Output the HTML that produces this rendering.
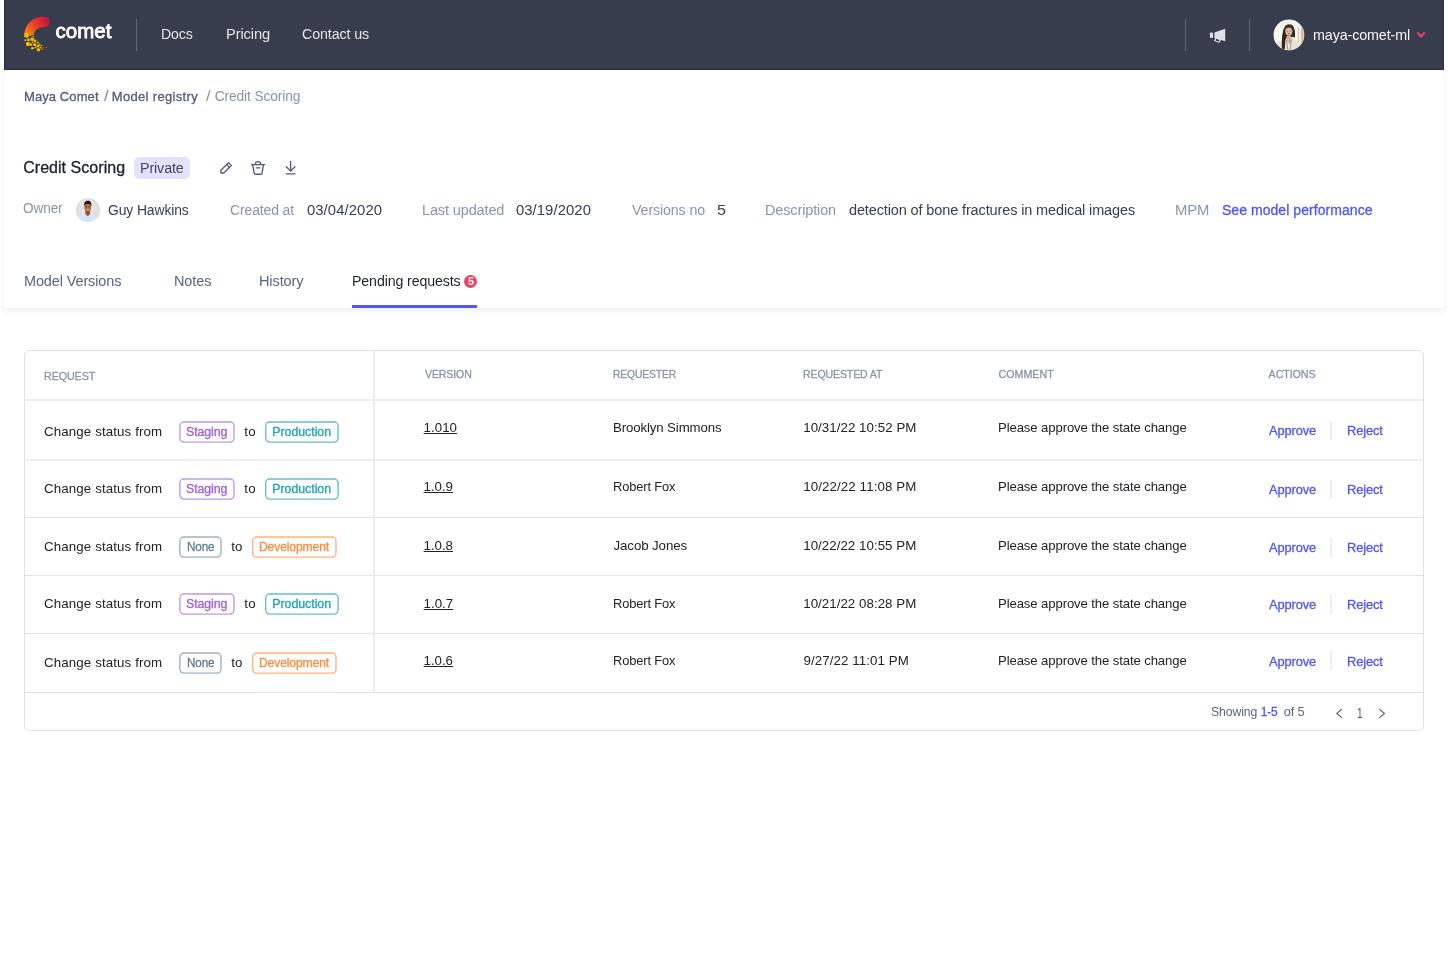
<!DOCTYPE html>
<html lang="en">
<head>
<meta charset="utf-8">
<title>Credit Scoring - Model registry - Comet</title>
<style>
html,body{margin:0;padding:0;}
body{width:1448px;height:960px;overflow:hidden;background:#fff;position:relative;font-family:"Liberation Sans",sans-serif;}
.g{display:contents;}
.t{position:absolute;white-space:pre;line-height:20px;font-family:"Liberation Sans",sans-serif;}
.nav{position:absolute;left:4px;top:0;width:1440px;height:70px;background:#383D4E;box-sizing:border-box;border-left:1px solid #2A2F43;border-right:1px solid #2A2F43;border-bottom:1px solid #262B40;}
.panel{position:absolute;left:4px;top:70px;width:1440px;height:238px;background:#fff;box-shadow:0 3px 6px rgba(0,0,0,0.07);}
.vd{position:absolute;width:1px;background:#5D6580;}
.pill{position:absolute;left:134px;top:157px;width:56px;height:22px;border-radius:5px;background:#E3E2FC;}
.tabline{position:absolute;left:352px;top:305px;width:125px;height:3px;background:#5155F5;}
.dot{position:absolute;left:464px;top:274.9px;width:13.1px;height:13.1px;border-radius:50%;background:#EE4067;}
.table{position:absolute;left:24px;top:350px;width:1400px;height:381px;box-sizing:border-box;border:1px solid #E2E2E4;border-radius:5px;background:#fff;}
.hl{position:absolute;left:25px;width:1398px;height:1px;background:#E3E3E5;}
.vl{position:absolute;left:373px;top:351px;width:2px;height:341px;background:#EEEEEF;}
.ad{position:absolute;left:1330px;width:2px;height:19px;background:#EEEEEF;}
.bd{position:absolute;box-sizing:border-box;border:1px solid #ccc;border-radius:5px;background:#fff;}
svg{position:absolute;overflow:visible;}
</style>
</head>
<body>
<div class="nav"></div>
<div class="panel"></div>

<!-- logo -->
<svg style="left:0;top:0" width="130" height="70" viewBox="0 0 130 70">
<defs>
<linearGradient id="lg1" x1="46" y1="18" x2="26" y2="36" gradientUnits="userSpaceOnUse">
<stop offset="0" stop-color="#E3123C"/><stop offset="0.45" stop-color="#EE3A26"/><stop offset="1" stop-color="#F5900C"/>
</linearGradient>
<linearGradient id="lg2" x1="49" y1="22" x2="34" y2="34" gradientUnits="userSpaceOnUse">
<stop offset="0" stop-color="#B3153A" stop-opacity="0.85"/><stop offset="1" stop-color="#E8501F" stop-opacity="0"/>
</linearGradient>
</defs>
<path d="M44.6 16.9 C34 16.2 25.4 23.5 24.3 33.8 L33.6 35.2 C34.4 30.2 38.4 26.8 44.4 27 C51.2 27.1 51.6 17.2 44.6 16.9 Z" fill="url(#lg1)"/>
<path d="M44.6 18.4 C38 20 32 25.5 30 34.6 L33.6 35.2 C34.4 30.2 38.4 26.8 44.4 27 C50.2 27.1 50.6 18.8 44.6 18.4 Z" fill="url(#lg2)"/>
<g fill="#F6B400">
<polygon points="26.5,32.4 28.9,33.8 28.9,36.7 26.5,38.1 24.1,36.7 24.1,33.8"/>
<circle cx="30.5" cy="35" r="0.9"/><circle cx="33.4" cy="36.3" r="0.8"/>
<circle cx="32.2" cy="39.2" r="2"/><circle cx="28.3" cy="39.8" r="1.5"/><circle cx="25.3" cy="40.3" r="1"/>
<circle cx="35" cy="41" r="1.4"/><circle cx="32.5" cy="42.5" r="0.8"/><circle cx="37.7" cy="42.5" r="1"/>
<circle cx="28" cy="44" r="2.2"/><circle cx="31" cy="44.6" r="1.3"/><circle cx="34.7" cy="44.6" r="1.7"/>
<circle cx="38" cy="46" r="1.5"/><circle cx="39.5" cy="44.5" r="0.9"/><circle cx="41.5" cy="45.5" r="0.8"/>
<circle cx="32.5" cy="48.2" r="1.3"/><circle cx="35.6" cy="47.5" r="1.1"/><circle cx="38.5" cy="49.7" r="1.8"/>
<circle cx="40.5" cy="47.5" r="0.9"/><circle cx="42.2" cy="49.2" r="0.9" opacity="0.6"/>
<circle cx="43.5" cy="47.5" r="0.6" opacity="0.5"/><circle cx="46.5" cy="47.4" r="0.6" opacity="0.5"/><circle cx="46" cy="49.3" r="0.5" opacity="0.4"/>
</g>
</svg>

<div class="vd" style="left:136px;top:19px;height:32px"></div>
<div class="vd" style="left:1185px;top:19px;height:32px"></div>
<div class="vd" style="left:1249px;top:19px;height:32px"></div>

<!-- megaphone -->
<svg style="left:1203px;top:22px" width="30" height="26" viewBox="1203 22 30 26">
<g fill="#DFE2EC">
<rect x="1209.9" y="32.4" width="3.1" height="5.6" rx="0.8"/>
<polygon points="1214.4,32.6 1225.2,28.8 1225.2,41.2 1214.4,38"/>
<path d="M1215.7 37.6 L1213.8 40.7 L1219.2 42.9 L1221.2 39.4 Z M1216.3 38.8 L1219.5 40.0 L1218.7 41.7 L1215.5 40.5 Z" fill-rule="evenodd"/>
</g>
</svg>

<!-- user avatar -->
<svg style="left:1269px;top:15px" width="40" height="40" viewBox="0 0 40 40">
<defs><clipPath id="ca"><circle cx="20" cy="19.9" r="15.3"/></clipPath><filter id="bl2" x="-10%" y="-10%" width="120%" height="120%"><feGaussianBlur stdDeviation="0.4"/></filter></defs>
<g clip-path="url(#ca)">
<rect width="40" height="40" fill="#F2F2F0"/>
<g filter="url(#bl2)">
<rect x="4" y="4" width="9" height="26" fill="#F8F8F7"/>
<rect x="28.9" y="12.5" width="1.2" height="15" fill="#DCC6AA"/>
<rect x="32.2" y="11.5" width="2.3" height="20" fill="#D3B690"/>
<path d="M13.2 34 C12.6 27 13.4 17 15.6 12 C17 8.8 22.4 8 24.4 11.6 C26.2 15 26.4 19.5 25.8 22.6 L23 22 L17.4 22.5 L15.8 33.5 Z" fill="#3A2A22"/>
<path d="M6 31 C9 26.5 13.5 25.2 17 24.2 L23 24 C26.5 24.8 30.5 26 33.5 30 L33 40 L6 40 Z" fill="#E8E2D7"/>
<path d="M17.6 21 L22.4 21 L22.8 24.8 L20.2 29.5 L17.4 25 Z" fill="#D4AE96"/>
<path d="M17.8 27.5 L20.1 35.5 L22.2 27.5 L20.2 29.5 Z" fill="#F7F5F0"/>
<ellipse cx="19.8" cy="16" rx="3.6" ry="4.8" fill="#DDB9A1"/>
<path d="M16.3 15.5 C16.5 12.5 18 11 19.8 11 C21.8 11 23.2 12.6 23.4 15.5 C22.6 13.4 21.4 12.6 19.8 12.6 C18.2 12.6 17 13.4 16.3 15.5 Z" fill="#3A2A22"/>
<rect x="18.7" y="18.1" width="2.1" height="0.8" rx="0.4" fill="#B5574C"/>
<path d="M17.4 16 h1.6 M20.6 16 h1.6" stroke="#6B5548" stroke-width="0.5"/>
<path d="M13 35 C12.4 28 13 19 15 13.5 C16.6 18 16.4 27 15.8 34 Z" fill="#33251E"/>
<path d="M17.6 25 L18.8 35 M22.2 25 L20.9 35" stroke="#5A4E44" stroke-width="0.55" fill="none"/>
</g>
</g>
</svg>

<!-- nav chevron -->
<svg style="left:1415px;top:30px" width="12" height="10" viewBox="1415 30 12 10">
<path d="M1417.9 33.1 L1420.95 36.6 L1424 33.1" fill="none" stroke="#EF4368" stroke-width="2.1" stroke-linecap="round" stroke-linejoin="round"/>
</svg>

<div class="pill"></div>

<!-- title icons -->
<svg style="left:214px;top:156px" width="90" height="24" viewBox="214 156 90 24">
<g fill="none" stroke="#555C7C" stroke-width="1.35" stroke-linejoin="round" stroke-linecap="round">
<path d="M220.9 173 L220.9 170.3 L228.5 162.7 L231.3 165.5 L223.8 173 Z"/>
<path d="M226.6 164.6 L229.4 167.4"/>
<path d="M251.4 164.6 L264.6 164.6"/>
<path d="M255.3 164.4 A2.7 2.7 0 0 1 260.7 164.4"/>
<path d="M252.7 164.8 L254.2 173.3 Q254.4 174.2 255.3 174.2 L260.9 174.2 Q261.8 174.2 262 173.3 L263.4 164.8"/>
<path d="M256.4 167.8 L259.8 167.8"/>
<path d="M290.6 161.4 L290.6 171"/>
<path d="M286.2 166.7 L290.6 171.1 L295 166.7"/>
<path d="M286.2 173.8 L295 173.8"/>
</g>
</svg>

<!-- owner avatar -->
<svg style="left:72px;top:194px" width="32" height="32" viewBox="0 0 32 32">
<defs>
<clipPath id="cb"><circle cx="16" cy="16" r="12.1"/></clipPath>
<radialGradient id="rg" cx="0.5" cy="0.42" r="0.55"><stop offset="0" stop-color="#F0F0F0"/><stop offset="1" stop-color="#D9D9DB"/></radialGradient>
<filter id="bl" x="-10%" y="-10%" width="120%" height="120%"><feGaussianBlur stdDeviation="0.35"/></filter>
</defs>
<g clip-path="url(#cb)">
<rect x="3" y="3" width="26" height="26" fill="url(#rg)"/>
<g filter="url(#bl)">
<path d="M13.5 17 L18 17 L18.4 20.2 L15.8 23 L13.1 20.2 Z" fill="#9A5A32"/>
<path d="M3 29 L3 25 C6.5 22.6 10 20.9 12.9 19.5 L15.8 22.6 L18.6 19.5 C21.5 20.9 25 22.6 29 25 L29 29 Z" fill="#D8E5F7"/>
<path d="M15.8 22.6 L15.8 28" stroke="#C2D3EE" stroke-width="0.5"/>
<path d="M12.3 13.6 C12.3 10.4 13.6 9 15.7 9 C17.8 9 19.2 10.4 19.2 13.6 C19.2 16.6 17.6 18.7 15.7 18.7 C13.8 18.7 12.3 16.6 12.3 13.6 Z" fill="#B7703F"/>
<path d="M12.1 12.6 C11.6 8.8 13.5 6.8 15.8 6.8 C18.2 6.8 19.9 8.8 19.4 12.6 C18.9 10.4 17.7 9.8 15.7 9.8 C13.7 9.8 12.6 10.4 12.1 12.6 Z" fill="#15110E"/>
<path d="M13.2 12.6 h2 M16.4 12.6 h2" stroke="#4A2E1C" stroke-width="0.7"/>
<path d="M14.2 15.4 Q15.8 17.3 17.4 15.4 Z" fill="#F6EAE4"/>
<path d="M13.5 17.2 Q15.8 19.6 18 17.2 Q15.8 18.4 13.5 17.2 Z" fill="#3A2416"/>
</g>
</g>
</svg>

<div class="tabline"></div>
<div class="dot"></div>

<div class="table"></div>
<div class="hl" style="top:399px;height:2px;background:#EEEEEF"></div>
<div class="hl" style="top:459px;height:2px;background:#EEEEEF"></div>
<div class="hl" style="top:517px"></div>
<div class="hl" style="top:575px"></div>
<div class="hl" style="top:633px"></div>
<div class="hl" style="top:692px"></div>
<div class="vl"></div>
<div class="ad" style="top:421px"></div>
<div class="ad" style="top:480px"></div>
<div class="ad" style="top:538px"></div>
<div class="ad" style="top:595px"></div>
<div class="ad" style="top:651px"></div>
<svg style="left:0;top:0" width="1448" height="960" viewBox="0 0 1448 960"><g fill="#fff" stroke-width="1.4"><rect x="179.90" y="422.00" width="54.10" height="20.10" rx="4" ry="4" stroke="#BF99EC"/><rect x="265.70" y="422.00" width="72.40" height="20.10" rx="4" ry="4" stroke="#62C0CE"/><rect x="179.90" y="479.00" width="54.10" height="20.10" rx="4" ry="4" stroke="#BF99EC"/><rect x="265.70" y="479.00" width="72.40" height="20.10" rx="4" ry="4" stroke="#62C0CE"/><rect x="179.90" y="537.00" width="41.10" height="20.10" rx="4" ry="4" stroke="#9EB3BE"/><rect x="252.60" y="537.00" width="83.40" height="20.10" rx="4" ry="4" stroke="#FFB27F"/><rect x="179.90" y="594.00" width="54.10" height="20.10" rx="4" ry="4" stroke="#BF99EC"/><rect x="265.70" y="594.00" width="72.40" height="20.10" rx="4" ry="4" stroke="#62C0CE"/><rect x="179.90" y="653.00" width="41.10" height="20.10" rx="4" ry="4" stroke="#9EB3BE"/><rect x="252.60" y="653.00" width="83.40" height="20.10" rx="4" ry="4" stroke="#FFB27F"/></g></svg>

<!-- pager chevrons -->
<svg style="left:1330px;top:704px" width="62" height="18" viewBox="1330 704 62 18">
<g fill="none" stroke="#5C6384" stroke-width="1.2" stroke-linecap="round" stroke-linejoin="round">
<path d="M1341.6 709.4 L1336.8 713.5 L1341.6 717.6"/>
<path d="M1379.6 709.4 L1384.4 713.5 L1379.6 717.6"/>
</g>
</svg>

<div id="txt" style="position:absolute;left:0;top:0;width:1448px;height:960px;will-change:transform;">
<nav class="g" aria-label="Main">
<span class="t" style="left:55.6px;top:21px;font-size:20.5px;color:#FFFFFF;letter-spacing:-0.021px;font-weight:400;-webkit-text-stroke:0.8px currentColor;">comet</span>
<span class="t" style="left:160.8px;top:24px;font-size:14.84px;color:#E3E5EC;letter-spacing:-0.120px;transform:scaleX(0.9520);transform-origin:0 50%;font-weight:400;">Docs</span>
<span class="t" style="left:225.7px;top:24px;font-size:14.84px;color:#E3E5EC;letter-spacing:-0.120px;transform:scaleX(0.9903);transform-origin:0 50%;font-weight:400;">Pricing</span>
<span class="t" style="left:302.1px;top:24px;font-size:14.84px;color:#E3E5EC;letter-spacing:-0.120px;transform:scaleX(0.9610);transform-origin:0 50%;font-weight:400;">Contact us</span>
<span class="t" style="left:1312.7px;top:25px;font-size:14.5px;color:#F6F7FA;letter-spacing:-0.120px;transform:scaleX(0.9869);transform-origin:0 50%;font-weight:400;">maya-comet-ml</span>
</nav>
<nav class="g" aria-label="Breadcrumb">
<span class="t" style="left:24.0px;top:87px;font-size:13.0px;color:#555B7A;letter-spacing:0.094px;font-weight:400;-webkit-text-stroke:0.3px currentColor;">Maya Comet</span>
<span class="t" style="left:104.0px;top:87px;font-size:13.78px;color:#7A819E;letter-spacing:0.000px;transform:scaleX(1.2143);transform-origin:0 50%;font-weight:400;">/</span>
<span class="t" style="left:111.8px;top:87px;font-size:13.0px;color:#555B7A;letter-spacing:0.325px;font-weight:400;-webkit-text-stroke:0.3px currentColor;">Model registry</span>
<span class="t" style="left:206.3px;top:87px;font-size:13.78px;color:#8B93AE;letter-spacing:0.000px;transform:scaleX(1.2143);transform-origin:0 50%;font-weight:400;">/</span>
<span class="t" style="left:214.7px;top:87px;font-size:13.78px;color:#8B93AE;letter-spacing:-0.120px;font-weight:400;">Credit Scoring</span>
</nav>
<header class="g">
<span class="t" style="left:23.2px;top:158px;font-size:16.0px;color:#1E2130;letter-spacing:0.040px;font-weight:400;-webkit-text-stroke:0.3px currentColor;">Credit Scoring</span>
<span class="t" style="left:139.6px;top:158px;font-size:14.84px;color:#3F4464;letter-spacing:-0.120px;transform:scaleX(0.9629);transform-origin:0 50%;font-weight:400;">Private</span>
</header>
<section class="g" aria-label="Model details">
<span class="t" style="left:23.4px;top:198px;font-size:14.84px;color:#8B93AE;letter-spacing:-0.120px;transform:scaleX(0.9173);transform-origin:0 50%;font-weight:400;">Owner</span>
<span class="t" style="left:108.1px;top:200px;font-size:14.84px;color:#383D55;letter-spacing:-0.120px;transform:scaleX(0.9376);transform-origin:0 50%;font-weight:400;">Guy Hawkins</span>
<span class="t" style="left:230.1px;top:200px;font-size:14.84px;color:#8B93AE;letter-spacing:-0.120px;transform:scaleX(0.9406);transform-origin:0 50%;font-weight:400;">Created at</span>
<span class="t" style="left:306.9px;top:200px;font-size:14.84px;color:#383D55;letter-spacing:0.098px;font-weight:400;">03/04/2020</span>
<span class="t" style="left:421.5px;top:200px;font-size:14.84px;color:#8B93AE;letter-spacing:-0.120px;transform:scaleX(0.9757);transform-origin:0 50%;font-weight:400;">Last updated</span>
<span class="t" style="left:515.9px;top:200px;font-size:14.84px;color:#383D55;letter-spacing:0.086px;font-weight:400;">03/19/2020</span>
<span class="t" style="left:631.6px;top:200px;font-size:14.84px;color:#8B93AE;letter-spacing:-0.120px;transform:scaleX(0.9590);transform-origin:0 50%;font-weight:400;">Versions no</span>
<span class="t" style="left:716.5px;top:200px;font-size:14.84px;color:#383D55;letter-spacing:0.000px;transform:scaleX(1.0912);transform-origin:0 50%;font-weight:400;">5</span>
<span class="t" style="left:764.6px;top:200px;font-size:14.84px;color:#8B93AE;letter-spacing:-0.120px;transform:scaleX(0.9752);transform-origin:0 50%;font-weight:400;">Description</span>
<span class="t" style="left:849.2px;top:200px;font-size:14.84px;color:#383D55;letter-spacing:-0.120px;transform:scaleX(0.9763);transform-origin:0 50%;font-weight:400;">detection of bone fractures in medical images</span>
<span class="t" style="left:1175.0px;top:200px;font-size:14.84px;color:#8B93AE;letter-spacing:-0.083px;font-weight:400;">MPM</span>
<span class="t" style="left:1221.9px;top:200px;font-size:14.0px;color:#5155F5;letter-spacing:0.063px;font-weight:400;-webkit-text-stroke:0.3px currentColor;">See model performance</span>
</section>
<div class="g" role="tablist">
<span class="t" style="left:23.6px;top:271px;font-size:14.84px;color:#5C6384;letter-spacing:-0.120px;transform:scaleX(0.9756);transform-origin:0 50%;font-weight:400;">Model Versions</span>
<span class="t" style="left:173.7px;top:271px;font-size:14.84px;color:#5C6384;letter-spacing:-0.120px;transform:scaleX(0.9781);transform-origin:0 50%;font-weight:400;">Notes</span>
<span class="t" style="left:258.7px;top:271px;font-size:14.84px;color:#5C6384;letter-spacing:-0.120px;transform:scaleX(0.9798);transform-origin:0 50%;font-weight:400;">History</span>
<span class="t" style="left:351.9px;top:271px;font-size:14.84px;color:#1E2130;letter-spacing:-0.120px;transform:scaleX(0.9566);transform-origin:0 50%;font-weight:400;">Pending requests</span>
<span class="t" style="left:467.9px;top:272px;font-size:10.2px;color:#FFFFFF;letter-spacing:0.000px;transform:scaleX(1.0739);transform-origin:0 50%;font-weight:700;">5</span>
</div>
<div class="g" role="row">
<span class="t" style="left:44.0px;top:366px;font-size:11.7px;color:#8B93AE;letter-spacing:-0.120px;transform:scaleX(0.9191);transform-origin:0 50%;font-weight:400;-webkit-text-stroke:0.3px currentColor;">REQUEST</span>
<span class="t" style="left:424.5px;top:364px;font-size:10.7px;color:#8B93AE;letter-spacing:-0.120px;transform:scaleX(0.9872);transform-origin:0 50%;font-weight:400;-webkit-text-stroke:0.3px currentColor;">VERSION</span>
<span class="t" style="left:613.2px;top:364px;font-size:10.7px;color:#8B93AE;letter-spacing:-0.120px;transform:scaleX(0.9653);transform-origin:0 50%;font-weight:400;-webkit-text-stroke:0.3px currentColor;">REQUESTER</span>
<span class="t" style="left:803.0px;top:364px;font-size:10.7px;color:#8B93AE;letter-spacing:-0.120px;transform:scaleX(0.9877);transform-origin:0 50%;font-weight:400;-webkit-text-stroke:0.3px currentColor;">REQUESTED AT</span>
<span class="t" style="left:998.4px;top:364px;font-size:10.7px;color:#8B93AE;letter-spacing:0.018px;font-weight:400;-webkit-text-stroke:0.3px currentColor;">COMMENT</span>
<span class="t" style="left:1268.6px;top:364px;font-size:10.7px;color:#8B93AE;letter-spacing:-0.079px;font-weight:400;-webkit-text-stroke:0.3px currentColor;">ACTIONS</span>
</div>
<div class="g" role="row">
<span class="t" style="left:44.0px;top:422px;font-size:13.3px;color:#222328;letter-spacing:0.124px;font-weight:400;">Change status from</span>
<span class="t" style="left:186.0px;top:422px;font-size:12.4px;color:#A061DD;letter-spacing:-0.120px;font-weight:400;-webkit-text-stroke:0.3px currentColor;">Staging</span>
<span class="t" style="left:244.3px;top:422px;font-size:13.3px;color:#222328;letter-spacing:0.225px;font-weight:400;">to</span>
<span class="t" style="left:272.3px;top:422px;font-size:12.4px;color:#1FA2B8;letter-spacing:-0.050px;font-weight:400;-webkit-text-stroke:0.3px currentColor;">Production</span>
<span class="t" style="left:423.6px;top:418px;font-size:13.3px;color:#222328;letter-spacing:0.023px;font-weight:400;text-decoration:underline;text-underline-offset:1px;text-decoration-thickness:1px;">1.010</span>
<span class="t" style="left:612.8px;top:418px;font-size:13.3px;color:#222328;letter-spacing:-0.120px;transform:scaleX(0.9955);transform-origin:0 50%;font-weight:400;">Brooklyn Simmons</span>
<span class="t" style="left:803.2px;top:418px;font-size:13.3px;color:#222328;letter-spacing:0.052px;font-weight:400;">10/31/22 10:52 PM</span>
<span class="t" style="left:997.7px;top:418px;font-size:13.3px;color:#222328;letter-spacing:-0.120px;transform:scaleX(0.9892);transform-origin:0 50%;font-weight:400;">Please approve the state change</span>
<span class="t" style="left:1268.6px;top:421px;font-size:13.0px;color:#5155F5;letter-spacing:-0.120px;transform:scaleX(0.9893);transform-origin:0 50%;font-weight:400;-webkit-text-stroke:0.3px currentColor;">Approve</span>
<span class="t" style="left:1347.0px;top:421px;font-size:13.0px;color:#5155F5;letter-spacing:-0.120px;transform:scaleX(0.9881);transform-origin:0 50%;font-weight:400;-webkit-text-stroke:0.3px currentColor;">Reject</span>
</div>
<div class="g" role="row">
<span class="t" style="left:44.0px;top:479px;font-size:13.3px;color:#222328;letter-spacing:0.124px;font-weight:400;">Change status from</span>
<span class="t" style="left:186.0px;top:479px;font-size:12.4px;color:#A061DD;letter-spacing:-0.120px;font-weight:400;-webkit-text-stroke:0.3px currentColor;">Staging</span>
<span class="t" style="left:244.3px;top:479px;font-size:13.3px;color:#222328;letter-spacing:0.225px;font-weight:400;">to</span>
<span class="t" style="left:272.3px;top:479px;font-size:12.4px;color:#1FA2B8;letter-spacing:-0.050px;font-weight:400;-webkit-text-stroke:0.3px currentColor;">Production</span>
<span class="t" style="left:423.6px;top:477px;font-size:13.3px;color:#222328;letter-spacing:-0.041px;font-weight:400;text-decoration:underline;text-underline-offset:1px;text-decoration-thickness:1px;">1.0.9</span>
<span class="t" style="left:612.8px;top:477px;font-size:13.3px;color:#222328;letter-spacing:-0.120px;transform:scaleX(0.9657);transform-origin:0 50%;font-weight:400;">Robert Fox</span>
<span class="t" style="left:803.2px;top:477px;font-size:13.3px;color:#222328;letter-spacing:0.108px;font-weight:400;">10/22/22 11:08 PM</span>
<span class="t" style="left:997.7px;top:477px;font-size:13.3px;color:#222328;letter-spacing:-0.120px;transform:scaleX(0.9892);transform-origin:0 50%;font-weight:400;">Please approve the state change</span>
<span class="t" style="left:1268.6px;top:480px;font-size:13.0px;color:#5155F5;letter-spacing:-0.120px;transform:scaleX(0.9893);transform-origin:0 50%;font-weight:400;-webkit-text-stroke:0.3px currentColor;">Approve</span>
<span class="t" style="left:1347.0px;top:480px;font-size:13.0px;color:#5155F5;letter-spacing:-0.120px;transform:scaleX(0.9881);transform-origin:0 50%;font-weight:400;-webkit-text-stroke:0.3px currentColor;">Reject</span>
</div>
<div class="g" role="row">
<span class="t" style="left:44.0px;top:537px;font-size:13.3px;color:#222328;letter-spacing:0.124px;font-weight:400;">Change status from</span>
<span class="t" style="left:186.6px;top:537px;font-size:12.4px;color:#5F7D8C;letter-spacing:-0.120px;transform:scaleX(0.9428);transform-origin:0 50%;font-weight:400;-webkit-text-stroke:0.3px currentColor;">None</span>
<span class="t" style="left:231.3px;top:537px;font-size:13.3px;color:#222328;letter-spacing:-0.075px;font-weight:400;">to</span>
<span class="t" style="left:259.3px;top:537px;font-size:12.4px;color:#FB8C3E;letter-spacing:-0.120px;transform:scaleX(0.9765);transform-origin:0 50%;font-weight:400;-webkit-text-stroke:0.3px currentColor;">Development</span>
<span class="t" style="left:423.6px;top:536px;font-size:13.3px;color:#222328;letter-spacing:-0.047px;font-weight:400;text-decoration:underline;text-underline-offset:1px;text-decoration-thickness:1px;">1.0.8</span>
<span class="t" style="left:613.5px;top:536px;font-size:13.3px;color:#222328;letter-spacing:-0.103px;font-weight:400;">Jacob Jones</span>
<span class="t" style="left:803.2px;top:536px;font-size:13.3px;color:#222328;letter-spacing:0.046px;font-weight:400;">10/22/22 10:55 PM</span>
<span class="t" style="left:997.7px;top:536px;font-size:13.3px;color:#222328;letter-spacing:-0.120px;transform:scaleX(0.9892);transform-origin:0 50%;font-weight:400;">Please approve the state change</span>
<span class="t" style="left:1268.6px;top:538px;font-size:13.0px;color:#5155F5;letter-spacing:-0.120px;transform:scaleX(0.9893);transform-origin:0 50%;font-weight:400;-webkit-text-stroke:0.3px currentColor;">Approve</span>
<span class="t" style="left:1347.0px;top:538px;font-size:13.0px;color:#5155F5;letter-spacing:-0.120px;transform:scaleX(0.9881);transform-origin:0 50%;font-weight:400;-webkit-text-stroke:0.3px currentColor;">Reject</span>
</div>
<div class="g" role="row">
<span class="t" style="left:44.0px;top:594px;font-size:13.3px;color:#222328;letter-spacing:0.124px;font-weight:400;">Change status from</span>
<span class="t" style="left:186.0px;top:594px;font-size:12.4px;color:#A061DD;letter-spacing:-0.120px;font-weight:400;-webkit-text-stroke:0.3px currentColor;">Staging</span>
<span class="t" style="left:244.3px;top:594px;font-size:13.3px;color:#222328;letter-spacing:0.225px;font-weight:400;">to</span>
<span class="t" style="left:272.3px;top:594px;font-size:12.4px;color:#1FA2B8;letter-spacing:-0.050px;font-weight:400;-webkit-text-stroke:0.3px currentColor;">Production</span>
<span class="t" style="left:423.6px;top:594px;font-size:13.3px;color:#222328;letter-spacing:0.004px;font-weight:400;text-decoration:underline;text-underline-offset:1px;text-decoration-thickness:1px;">1.0.7</span>
<span class="t" style="left:612.8px;top:594px;font-size:13.3px;color:#222328;letter-spacing:-0.120px;transform:scaleX(0.9657);transform-origin:0 50%;font-weight:400;">Robert Fox</span>
<span class="t" style="left:803.2px;top:594px;font-size:13.3px;color:#222328;letter-spacing:0.046px;font-weight:400;">10/21/22 08:28 PM</span>
<span class="t" style="left:997.7px;top:594px;font-size:13.3px;color:#222328;letter-spacing:-0.120px;transform:scaleX(0.9892);transform-origin:0 50%;font-weight:400;">Please approve the state change</span>
<span class="t" style="left:1268.6px;top:595px;font-size:13.0px;color:#5155F5;letter-spacing:-0.120px;transform:scaleX(0.9893);transform-origin:0 50%;font-weight:400;-webkit-text-stroke:0.3px currentColor;">Approve</span>
<span class="t" style="left:1347.0px;top:595px;font-size:13.0px;color:#5155F5;letter-spacing:-0.120px;transform:scaleX(0.9881);transform-origin:0 50%;font-weight:400;-webkit-text-stroke:0.3px currentColor;">Reject</span>
</div>
<div class="g" role="row">
<span class="t" style="left:44.0px;top:653px;font-size:13.3px;color:#222328;letter-spacing:0.124px;font-weight:400;">Change status from</span>
<span class="t" style="left:186.6px;top:653px;font-size:12.4px;color:#5F7D8C;letter-spacing:-0.120px;transform:scaleX(0.9428);transform-origin:0 50%;font-weight:400;-webkit-text-stroke:0.3px currentColor;">None</span>
<span class="t" style="left:231.3px;top:653px;font-size:13.3px;color:#222328;letter-spacing:-0.075px;font-weight:400;">to</span>
<span class="t" style="left:259.3px;top:653px;font-size:12.4px;color:#FB8C3E;letter-spacing:-0.120px;transform:scaleX(0.9765);transform-origin:0 50%;font-weight:400;-webkit-text-stroke:0.3px currentColor;">Development</span>
<span class="t" style="left:423.6px;top:651px;font-size:13.3px;color:#222328;letter-spacing:-0.041px;font-weight:400;text-decoration:underline;text-underline-offset:1px;text-decoration-thickness:1px;">1.0.6</span>
<span class="t" style="left:612.8px;top:651px;font-size:13.3px;color:#222328;letter-spacing:-0.120px;transform:scaleX(0.9657);transform-origin:0 50%;font-weight:400;">Robert Fox</span>
<span class="t" style="left:803.5px;top:651px;font-size:13.3px;color:#222328;letter-spacing:0.086px;font-weight:400;">9/27/22 11:01 PM</span>
<span class="t" style="left:997.7px;top:651px;font-size:13.3px;color:#222328;letter-spacing:-0.120px;transform:scaleX(0.9892);transform-origin:0 50%;font-weight:400;">Please approve the state change</span>
<span class="t" style="left:1268.6px;top:652px;font-size:13.0px;color:#5155F5;letter-spacing:-0.120px;transform:scaleX(0.9893);transform-origin:0 50%;font-weight:400;-webkit-text-stroke:0.3px currentColor;">Approve</span>
<span class="t" style="left:1347.0px;top:652px;font-size:13.0px;color:#5155F5;letter-spacing:-0.120px;transform:scaleX(0.9881);transform-origin:0 50%;font-weight:400;-webkit-text-stroke:0.3px currentColor;">Reject</span>
</div>
<footer class="g">
<span class="t" style="left:1210.9px;top:702px;font-size:12.72px;color:#5C6384;letter-spacing:-0.120px;transform:scaleX(0.9618);transform-origin:0 50%;font-weight:400;">Showing</span>
<span class="t" style="left:1260.7px;top:702px;font-size:12.0px;color:#5155F5;letter-spacing:-0.120px;font-weight:400;-webkit-text-stroke:0.3px currentColor;">1-5</span>
<span class="t" style="left:1283.7px;top:702px;font-size:12.72px;color:#5C6384;letter-spacing:-0.120px;font-weight:400;">of 5</span>
<span class="t" style="left:1357.3px;top:704px;font-size:13.78px;color:#4A506E;letter-spacing:0.000px;transform:scaleX(0.7317);transform-origin:0 50%;font-weight:400;">1</span>
</footer>
</div>
</body>
</html>
